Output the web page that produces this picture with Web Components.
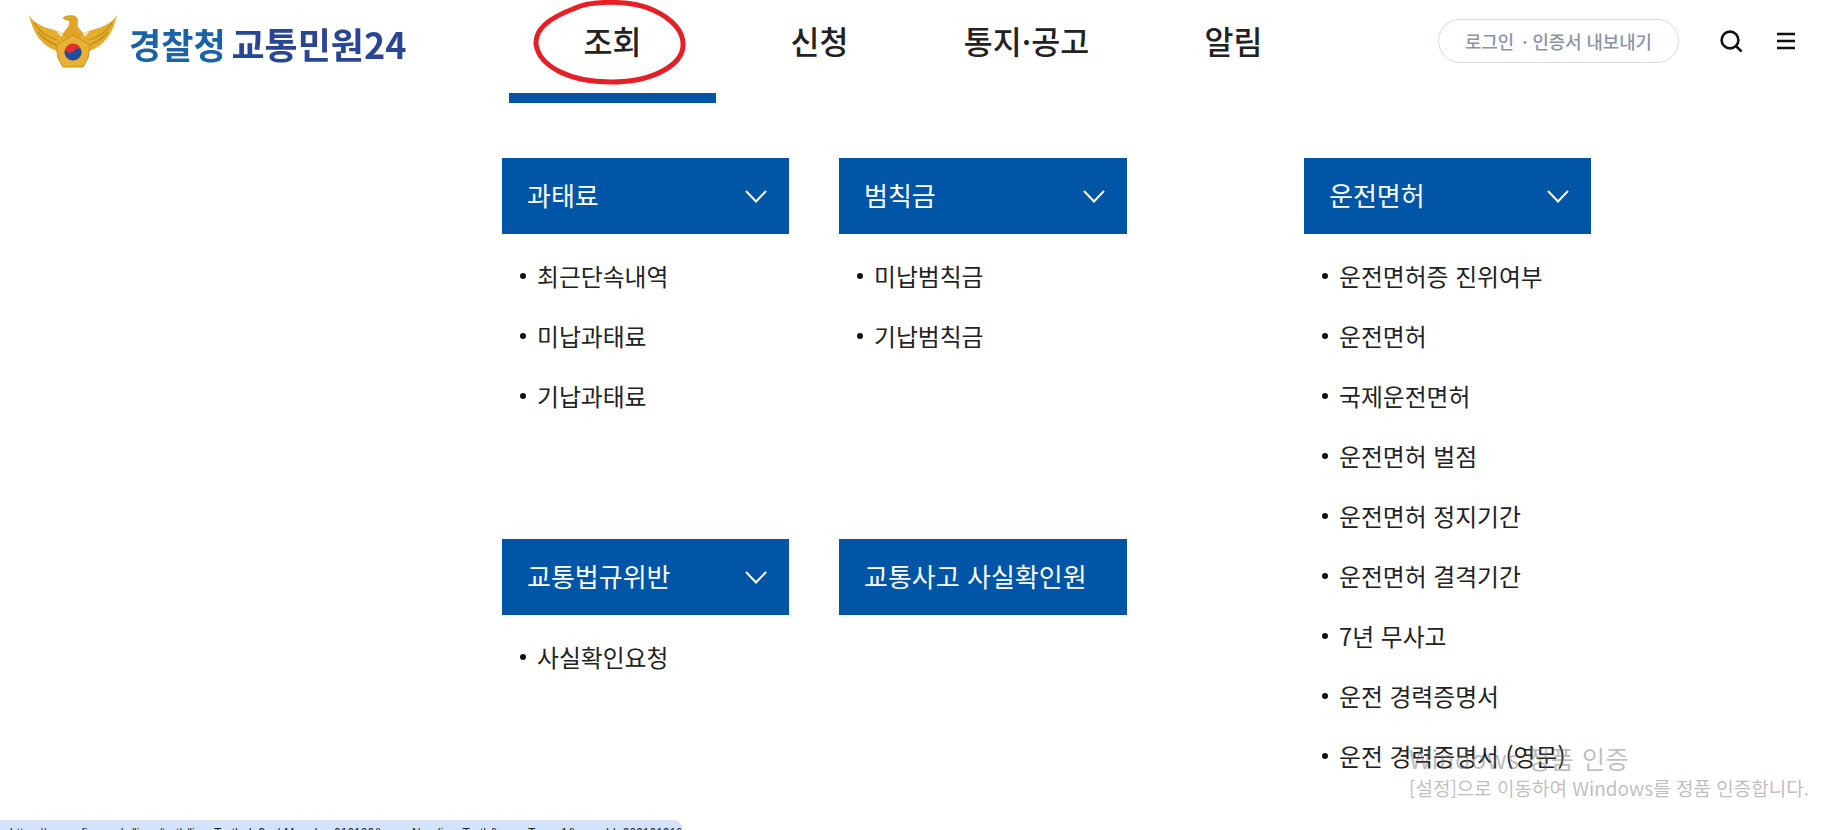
<!DOCTYPE html>
<html lang="ko">
<head>
<meta charset="utf-8">
<title>경찰청 교통민원24</title>
<style>
  html, body { margin: 0; padding: 0; background: #fff; }
  body { width: 1847px; height: 830px; overflow: hidden; position: relative; font-family: "Noto Sans CJK KR", "Noto Sans", sans-serif; }
</style>
</head>
<body>
<site-header></site-header>
<menu-board>
  <menu-group title="과태료" arrow>
    <menu-item>최근단속내역</menu-item>
    <menu-item>미납과태료</menu-item>
    <menu-item>기납과태료</menu-item>
  </menu-group>
  <menu-group title="범칙금" arrow>
    <menu-item>미납범칙금</menu-item>
    <menu-item>기납범칙금</menu-item>
  </menu-group>
  <menu-group title="운전면허" arrow slot="side">
    <menu-item>운전면허증 진위여부</menu-item>
    <menu-item>운전면허</menu-item>
    <menu-item>국제운전면허</menu-item>
    <menu-item>운전면허 벌점</menu-item>
    <menu-item>운전면허 정지기간</menu-item>
    <menu-item>운전면허 결격기간</menu-item>
    <menu-item>7년 무사고</menu-item>
    <menu-item>운전 경력증명서</menu-item>
    <menu-item>운전 경력증명서 (영문)</menu-item>
  </menu-group>
  <menu-group title="교통법규위반" arrow>
    <menu-item>사실확인요청</menu-item>
  </menu-group>
  <menu-group title="교통사고 사실확인원"></menu-group>
</menu-board>
<status-bubble>https://www.efine.go.kr/licen/truth/licenTruth.do?subMenuLv=010100&amp;menuNm=licenTruth&amp;menuType=1&amp;menuId=0001010100</status-bubble>
<activation-mark></activation-mark>

<script>
// 상단 헤더: 로고, 메뉴, 로그인 버튼, 아이콘
class SiteHeader extends HTMLElement {
  constructor() {
    super()
    this.attachShadow({mode: 'open'})
    this.shadowRoot.innerHTML = `
      <style>
        :host { display: flex; height: 103px; position: relative; font-family: "Noto Sans CJK KR", sans-serif; }
        .logo { width: 509px; display: flex; align-items: flex-start; padding: 14px 0 0 28px; box-sizing: border-box; }
        .logo svg { width: 90px; height: 54px; flex: none; filter: blur(.5px); }
        .logo .name { margin: 9px 0 0 11px; font-size: 35px; line-height: 40px; font-weight: 700; white-space: nowrap; filter: blur(.4px); }
        .logo .a { color: #1c62a8; }
        .logo .b { color: #2b4596; margin-left: -4px; font-size: 36px; }
        nav { display: flex; height: 103px; }
        nav a { width: 207px; height: 103px; box-sizing: border-box; text-align: center; color: #222; font-size: 31.5px; font-weight: 500; line-height: 81px; }
        nav a.on { border-bottom: 10px solid #0055a6; }
        .tools { display: flex; align-items: flex-start; margin-left: 101px; }
        .login { width: 241px; height: 44px; margin-top: 19px; box-sizing: border-box; border: 1px solid #d5dce8; border-radius: 22px; color: #8b94a6; font-size: 17.8px; font-weight: 500; display: flex; align-items: center; justify-content: center; white-space: nowrap; }
        .login i { font-style: normal; margin: 0 5px 0 8px; }
        .search { width: 24px; height: 24px; margin: 29px 0 0 40px; }
        .burger { width: 20px; height: 18px; margin: 32px 0 0 33px; }
        .ring { position: absolute; left: 533px; top: 0; width: 153px; height: 85px; }
      </style>
      <div class="logo">
        <svg viewBox="0 0 90 54">
          <path d="M1 1C5 8 14 13 26 16L41 21V32L29 37C15 33 5 20 1 1Z" fill="#e6ac2c"/>
          <path d="M89 1C85 8 76 13 64 16L49 21V32L61 37C75 33 85 20 89 1Z" fill="#e6ac2c"/>
          <path d="M6 9C11 17 19 23 29 26M10 18C15 24 21 28 28 31M84 9C79 17 71 23 61 26M80 18C75 24 69 28 62 31" stroke="#bd8a1e" stroke-width="1.2" fill="none"/>
          <path d="M28 17L36 19 33 23ZM62 17L54 19 57 23Z" fill="#f6e6b8"/>
          <path d="M35 4C38 1 45 1 48 3 50 5 50 9 49 12L55 20 45 27 35 20 41 12 42 7C40 6 37 6 35 4Z" fill="#e0a526" stroke="#c79320" stroke-width=".6"/>
          <path d="M45 21L62 31 60 44 55 53H35L30 44 28 31Z" fill="#e8b133" stroke="#c5901f" stroke-width="1"/>
          <circle cx="45" cy="38" r="8.5" fill="#e0312f"/>
          <path d="M36.5 38A8.5 8.5 0 0 0 53.5 38C53.5 35 50 33 47.5 35.5 45 38.5 41 40 39 37.5 38 36 37 36.5 36.5 38Z" fill="#1f4ea1"/>
        </svg>
        <div class="name"><span class="a">경찰청</span> <span class="b">교통민원24</span></div>
      </div>
      <nav>
        <a class="on">조회</a>
        <a>신청</a>
        <a>통지·공고</a>
        <a>알림</a>
      </nav>
      <div class="tools">
        <div class="login">로그인<i>·</i>인증서 내보내기</div>
        <svg class="search" viewBox="0 0 24 24" fill="none" stroke="#111" stroke-width="2.6"><circle cx="11" cy="11" r="8.4"/><path d="M17 17L22.6 22.6"/></svg>
        <svg class="burger" viewBox="0 0 20 18" stroke="#111" stroke-width="2.3"><path d="M1 2H19M1 9H19M1 16H19"/></svg>
      </div>
      <svg class="ring" viewBox="0 0 153 85" fill="none">
        <path d="M40 9C58 0 98 0 120 10C140 19 151 32 150 46C149 64 122 82 78 82C36 82 6 66 3 44C2 30 16 18 40 9Z" stroke="#e61e25" stroke-width="5"/>
      </svg>
    `
  }
}
customElements.define('site-header', SiteHeader)

// 메뉴 영역: 왼쪽 2열 그룹과 오른쪽 긴 그룹
class MenuBoard extends HTMLElement {
  constructor() {
    super()
    this.attachShadow({mode: 'open'})
    this.shadowRoot.innerHTML = `
      <style>
        :host { display: flex; padding: 55px 0 0 502px; align-items: flex-start; }
        .main { display: grid; grid-template-columns: 287px 288px; column-gap: 50px; grid-auto-rows: 381px; width: 625px; }
        .side { margin-left: 177px; }
      </style>
      <div class="main"><slot></slot></div>
      <div class="side"><slot name="side"></slot></div>
    `
  }
}
customElements.define('menu-board', MenuBoard)

class MenuGroup extends HTMLElement {
  constructor() {
    super()
    this.attachShadow({mode: 'open'})
    this.shadowRoot.innerHTML = `
      <style>
        :host { display: block; width: 100%; min-width: 287px; }
        .head { height: 76px; box-sizing: border-box; background: #0055a6; color: #fff; display: flex; align-items: center; justify-content: space-between; padding: 0 22px 0 25px; font-size: 26px; white-space: nowrap; }
        .title { margin-bottom: 3px; }
        svg { width: 22px; height: 13px; display: none; }
        :host([arrow]) svg { display: block; }
        ul { margin: 0; padding: 11px 0 0; list-style: none; }
      </style>
      <div class="head"><span class="title"></span>
        <svg viewBox="0 0 22 13" fill="none" stroke="#fff" stroke-width="2"><path d="M1 1L11 11.5 21 1"/></svg>
      </div>
      <ul><slot></slot></ul>
    `
  }
  connectedCallback() {
    this.shadowRoot.querySelector('.title').textContent = this.getAttribute('title')
    this.removeAttribute('title')
  }
}
customElements.define('menu-group', MenuGroup)

class MenuItem extends HTMLElement {
  constructor() {
    super()
    this.attachShadow({mode: 'open'})
    this.shadowRoot.innerHTML = `
      <style>
        :host { display: flex; align-items: center; height: 60px; padding-left: 18px; color: #222; font-size: 23.8px; white-space: nowrap; }
        i { width: 6px; height: 6px; border-radius: 50%; background: #111; margin: 2px 11px 0 0; flex: none; }
      </style>
      <i></i><slot></slot>
    `
  }
}
customElements.define('menu-item', MenuItem)

// 브라우저 링크 미리보기 (화면 아래쪽에 잘려 있음)
class StatusBubble extends HTMLElement {
  constructor() {
    super()
    this.attachShadow({mode: 'open'})
    this.shadowRoot.innerHTML = `
      <style>
        :host { position: absolute; left: 0; top: 820px; width: 682px; height: 10px; box-sizing: border-box; background: #d3e3fd; border: solid #e2e4e8; border-width: 1px 1px 0 0; border-radius: 0 8px 0 0; color: #1f1f1f; font: 12px/20px "Liberation Sans", sans-serif; padding: 2px 0 0 10px; overflow: hidden; white-space: nowrap; }
      </style>
      <slot></slot>
    `
  }
}
customElements.define('status-bubble', StatusBubble)

// 윈도우 정품 인증 워터마크
class ActivationMark extends HTMLElement {
  constructor() {
    super()
    this.attachShadow({mode: 'open'})
    this.shadowRoot.innerHTML = `
      <style>
        :host { position: absolute; left: 1409px; top: 742px; color: rgba(110,110,110,.45); font-family: "Noto Sans CJK KR", sans-serif; white-space: nowrap; pointer-events: none; }
        .t { font-size: 25px; line-height: 32px; font-weight: 400; letter-spacing: .6px; }
        .s { font-size: 19px; line-height: 26px; margin-top: 1px; font-weight: 400; }
      </style>
      <div class="t">Windows 정품 인증</div>
      <div class="s">[설정]으로 이동하여 Windows를 정품 인증합니다.</div>
    `
  }
}
customElements.define('activation-mark', ActivationMark)
</script>
</body>
</html>
